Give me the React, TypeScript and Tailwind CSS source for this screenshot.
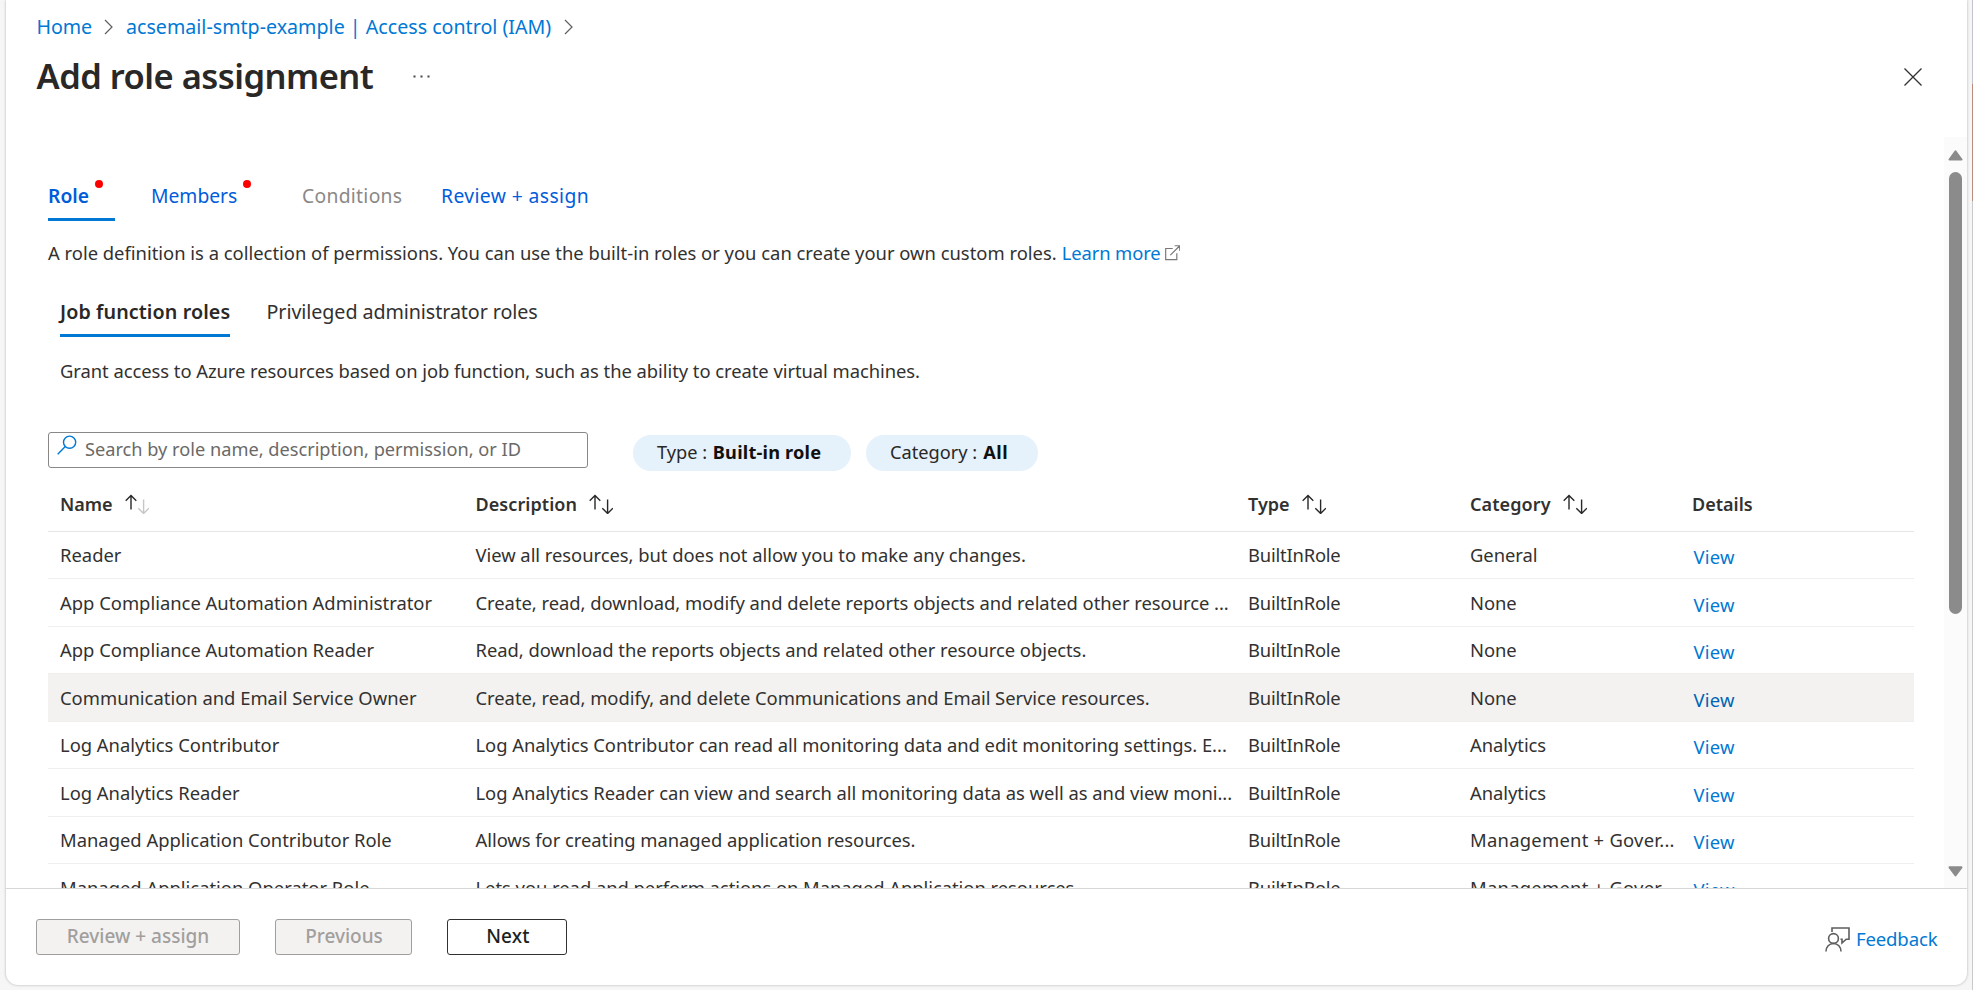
import React from "react";

type Role = { name: string; description: string; category: string; selected?: boolean };

const roles: Role[] = [
  { name: "Reader", description: "View all resources, but does not allow you to make any changes.", category: "General" },
  { name: "App Compliance Automation Administrator", description: "Create, read, download, modify and delete reports objects and related other resource ...", category: "None" },
  { name: "App Compliance Automation Reader", description: "Read, download the reports objects and related other resource objects.", category: "None" },
  { name: "Communication and Email Service Owner", description: "Create, read, modify, and delete Communications and Email Service resources.", category: "None", selected: true },
  { name: "Log Analytics Contributor", description: "Log Analytics Contributor can read all monitoring data and edit monitoring settings. E...", category: "Analytics" },
  { name: "Log Analytics Reader", description: "Log Analytics Reader can view and search all monitoring data as well as and view moni...", category: "Analytics" },
  { name: "Managed Application Contributor Role", description: "Allows for creating managed application resources.", category: "Management + Gover..." },
  { name: "Managed Application Operator Role", description: "Lets you read and perform actions on Managed Application resources", category: "Management + Gover..." },
];

const columns = "grid grid-cols-[415.5px_772.5px_222px_222px_1fr] pl-3";

const Chevron = () => (
  <svg className="mt-[5px] h-[16px] w-[10px] shrink-0" viewBox="0 0 10 16" fill="none" stroke="#605e5c" strokeWidth="1.2">
    <path d="M1 1l7 7-7 7" />
  </svg>
);

const SortArrows = ({ ascending = false }: { ascending?: boolean }) => (
  <svg className="ml-3 mt-[3px] h-5 w-6" viewBox="0 0 24 20" fill="none" strokeWidth="1.4">
    <path d="M6 15.5V1.5M0.7 6.7L6 1.4l5.3 5.3" stroke="#292827" />
    <path d="M18.6 5.5v14M13.3 14.2l5.3 5.3 5.3-5.3" stroke={ascending ? "#c8c6c4" : "#292827"} />
  </svg>
);

const RequiredDot = () => <span className="absolute -top-[2px] left-full ml-[6px] size-2 rounded-full bg-[#ff0000]" />;

function Header() {
  return (
    <header className="h-[137px] shrink-0 pl-[30.5px] pt-[15px]">
      <nav className="flex text-[19.65px] leading-6 text-[#0078d4]">
        <a className="whitespace-nowrap tracking-[-0.1px]">Home</a>
        <span className="mx-[12px] -mt-px flex"><Chevron /></span>
        <a className="mr-[13px] whitespace-nowrap">acsemail-smtp-example | Access control (IAM)</a>
        <span className="-mt-px flex"><Chevron /></span>
      </nav>
      <div className="mt-[13px] flex pr-[45px]">
        <h1 className="w-[376px] whitespace-nowrap text-[34.5px] font-[560] leading-[48px] tracking-[-0.52px] text-[#292827]">Add role assignment</h1>
        <svg className="mt-[23px] h-[3px] w-[17px]" viewBox="0 0 17 3" fill="#484644">
          <rect x="0.5" y="0.5" width="2" height="2" />
          <rect x="7.5" y="0.5" width="2" height="2" />
          <rect x="14.5" y="0.5" width="2" height="2" />
        </svg>
        <svg className="ml-auto mt-[16px] size-[18px]" viewBox="0 0 18 18" stroke="#323130" strokeWidth="1.3">
          <path d="M0.5 0.5l17 17M17.5 0.5l-17 17" />
        </svg>
      </div>
    </header>
  );
}

function WizardTabs() {
  return (
    <div className="flex h-[38px] text-[19.3px] leading-[26px] text-[#015cda]">
      <div className="w-[67px] border-b-[3px] border-[#0078d4] font-semibold">
        <span className="relative">Role<RequiredDot /></span>
      </div>
      <div className="ml-[36px] w-[151px]"><span className="relative">Members<RequiredDot /></span></div>
      <div className="w-[139px] tracking-[0.3px] text-[#8a8886]">Conditions</div>
      <div className="whitespace-nowrap tracking-[0.4px]">Review + assign</div>
    </div>
  );
}

function Filters() {
  return (
    <div className="mt-12 flex h-[39px]">
      <div className="flex h-9 w-[540px] rounded-[3px] border border-[#8a8886]">
        <svg className="ml-2 mt-[2px] size-[20px]" viewBox="0 0 20 20" fill="none" stroke="#0078d4" strokeWidth="1.4">
          <circle cx="12.6" cy="7.2" r="6.1" />
          <path d="M8.3 11.6L0.7 19.3" />
        </svg>
        <span className="ml-2 whitespace-nowrap text-[18.2px] leading-[32px] text-[#6b6967]">Search by role name, description, permission, or ID</span>
      </div>
      <div className="ml-[45px] mt-[3px] h-9 w-[218px] whitespace-nowrap rounded-full bg-[#e5f1fb] pl-6 text-[18.2px] leading-[34px] text-[#292827]">
        Type : <b className="ml-px font-bold tracking-[0.2px] text-[#11100f]">Built-in role</b>
      </div>
      <div className="ml-[15px] mt-[3px] h-9 w-[172px] whitespace-nowrap rounded-full bg-[#e5f1fb] pl-6 text-[18.2px] leading-[34px] text-[#292827]">
        Category : <b className="ml-[1.5px] font-bold tracking-[0.4px] text-[#11100f]">All</b>
      </div>
    </div>
  );
}

function RoleTable() {
  return (
    <div className="w-[1866px] text-[18.4px] leading-[26px] text-[#323130]">
      <div className={`${columns} h-[60.6px] border-b border-[#e6e6e6] pt-5 text-[18px] font-semibold`}>
        <div className="flex">Name<SortArrows ascending /></div>
        <div className="flex"><span className="tracking-[0.07px]">Description</span><SortArrows /></div>
        <div className="flex">Type<SortArrows /></div>
        <div className="flex"><span className="tracking-[0.1px]">Category</span><SortArrows /></div>
        <div>Details</div>
      </div>
      {roles.map((r) => (
        <div key={r.name} className={`${columns} h-[47.5px] whitespace-nowrap border-b border-[#f0efee] pt-[10.9px] ${r.selected ? "bg-[#f3f2f1]" : ""}`}>
          <div>{r.name}</div>
          <div className="tracking-[-0.035px]">{r.description}</div>
          <div className="tracking-[-0.2px]">BuiltInRole</div>
          <div className={r.category.length > 10 ? "tracking-[0.26px]" : "tracking-[-0.05px]"}>{r.category}</div>
          <a className={`pl-[1.5px] pt-[2px] tracking-[0.2px] ${r.selected ? "text-[#0064b4]" : "text-[#0078d4]"}`}>View</a>
        </div>
      ))}
    </div>
  );
}

function Scrollbar() {
  return (
    <div className="flex w-[23px] shrink-0 flex-col items-center bg-[#fbfbfb] pt-[13px]">
      <svg className="h-[11px] w-[15px] shrink-0" viewBox="0 0 15 11" fill="#8b8b8b" stroke="#8b8b8b" strokeWidth="2" strokeLinejoin="round">
        <path d="M7.5 1.3L13.5 9.5h-12z" />
      </svg>
      <div className="mt-[11px] h-[442px] w-[13px] shrink-0 rounded-full bg-[#8b8b8b]" />
      <svg className="mb-[11px] mt-auto h-[11px] w-[15px] shrink-0" viewBox="0 0 15 11" fill="#8b8b8b" stroke="#8b8b8b" strokeWidth="2" strokeLinejoin="round">
        <path d="M7.5 9.5L13.5 1.3h-12z" />
      </svg>
    </div>
  );
}

function Footer() {
  return (
    <footer className="flex flex-1 border-t border-[#d6d6d6] pl-[30px] pt-[30px] text-[19px] font-medium leading-[32px]">
      <button className="h-9 w-[204px] rounded-[3px] border border-[#a19f9d] bg-[#f3f2f1] pb-[2px] text-[#a19f9d]">Review + assign</button>
      <button className="ml-[35px] h-9 w-[137px] rounded-[3px] border border-[#a19f9d] bg-[#f3f2f1] pb-[2px] pl-px text-[#a19f9d]">Previous</button>
      <button className="ml-[35px] h-9 w-[120px] rounded-[3px] border border-[#323130] bg-white pb-[2px] pl-[2px] tracking-[0.2px] text-[#201f1e]">Next</button>
      <a className="ml-auto mr-[29.5px] flex text-[18.6px] font-normal leading-9 text-[#0078d4]">
        <svg className="mr-[6px] mt-[8px] size-[25px]" viewBox="0 0 25 25" fill="none" stroke="#605e5c" strokeWidth="1.6">
          <circle cx="8.5" cy="11.5" r="4.9" />
          <path d="M1 24.5c0-4.6 3.2-8 7.5-8s7.5 3.4 7.5 8" />
          <path d="M7 5V1h17v11.2h-2.8L17 16v-3.8h-1.5" />
        </svg>
        <span className="pt-[2px] tracking-[-0.15px]">Feedback</span>
      </a>
    </footer>
  );
}

export default function App() {
  return (
    <div className="flex h-[990px] w-[1973px] overflow-hidden bg-[#f6f6f6] pl-[6px] font-['Noto_Sans',sans-serif]">
      <div className="flex h-[985px] w-[1961px] flex-col overflow-hidden rounded-b-[12px] bg-white shadow-[0_0_3px_rgba(0,0,0,0.28)]">
        <Header />
        <main className="flex h-[751px] shrink-0 overflow-hidden">
          <div className="flex-1 pl-[42px] pt-[46px]">
            <WizardTabs />
            <p className="mt-[19px] flex whitespace-nowrap text-[18.4px] leading-[26px] text-[#323130]">
              A role definition is a collection of permissions. You can use the built-in roles or you can create your own custom roles.
              <a className="ml-[5px] flex text-[#0078d4]">
                <span className="tracking-[-0.1px]">Learn more</span>
                <svg className="ml-[4px] mt-[5px] size-[15.5px]" viewBox="0 0 16 16" fill="none" stroke="#7a7876" strokeWidth="1.2">
                  <path d="M8 3.6H0.7v11.5h11.5V8.5M5.5 10.5L15 1M10 0.8h5.2V6" />
                </svg>
              </a>
            </p>
            <div className="ml-3 mt-[33px] flex h-[38px] whitespace-nowrap text-[19.7px] leading-[26px] text-[#323130]">
              <div className="w-[170px] border-b-[3px] border-[#0078d4] font-semibold tracking-[0.1px] text-[#292827]">Job function roles</div>
              <div className="ml-[36.5px] tracking-[-0.08px]">Privileged administrator roles</div>
            </div>
            <p className="ml-3 mt-[21px] text-[18.4px] leading-[26px] tracking-[-0.05px] text-[#323130]">
              Grant access to Azure resources based on job function, such as the ability to create virtual machines.
            </p>
            <Filters />
            <RoleTable />
          </div>
          <Scrollbar />
        </main>
        <Footer />
      </div>
      <div className="ml-auto flex w-px flex-col">
        <div className="h-[84px] bg-[#c3c3cd]" />
        <div className="h-[117px] bg-[#b98d7c]" />
        <div className="flex-1 bg-[#c9c9c9]" />
      </div>
    </div>
  );
}
